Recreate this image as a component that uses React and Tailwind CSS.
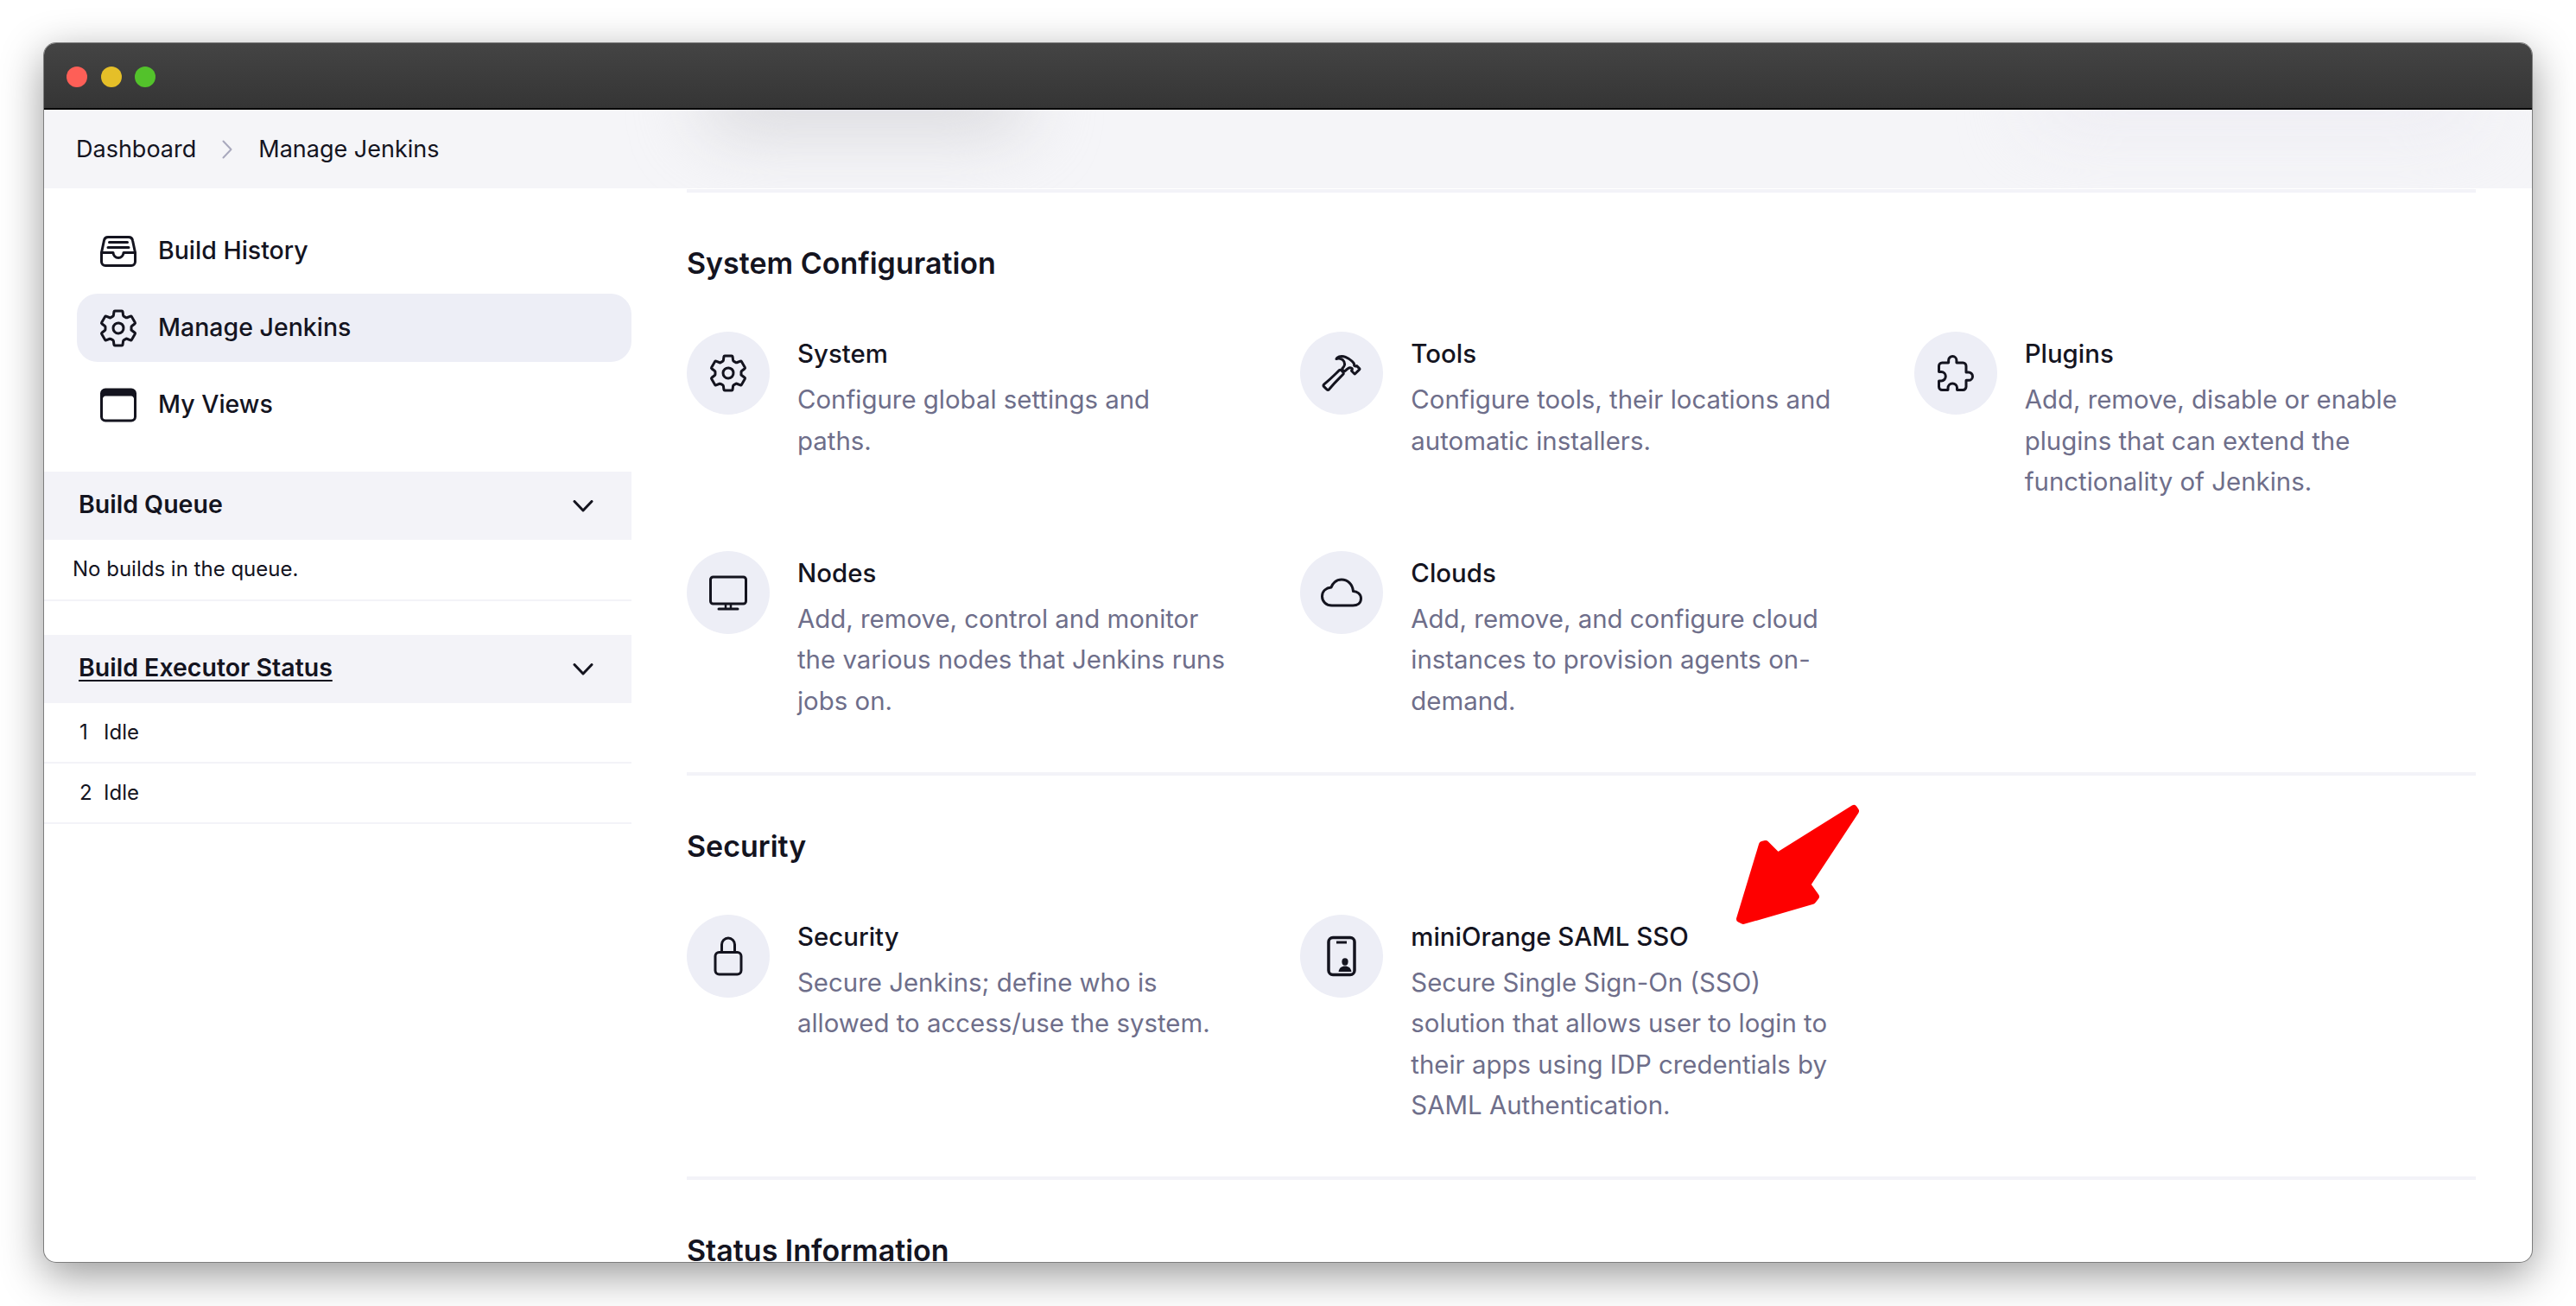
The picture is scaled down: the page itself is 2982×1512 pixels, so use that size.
import {
  IoFileTrayFullOutline,
  IoSettingsOutline,
  IoBrowsersOutline,
  IoHammerOutline,
  IoExtensionPuzzleOutline,
  IoCloudOutline,
  IoLockClosedOutline,
} from 'react-icons/io5';

function PhoneIcon() {
  return (
    <svg width="48" height="48" viewBox="0 0 48 48" fill="none">
      <rect x="9" y="2.5" width="30" height="43" rx="5" stroke="#14141f" strokeWidth="3.5" />
      <path d="M18 8h12" stroke="#14141f" strokeWidth="3" />
      <ellipse cx="28" cy="30.5" rx="3.6" ry="4.2" fill="#14141f" />
      <path d="M20.5 42c.6-4.6 3.6-6.6 7.5-6.6s6.900 2 7.500 6.600z" fill="#14141f" />
    </svg>
  );
}

function DesktopIcon() {
  return (
    <svg width="48" height="48" viewBox="0 0 48 48" fill="none">
      <rect x="3.500" y="6" width="41" height="31" rx="3" stroke="#14141f" strokeWidth="3" />
      <path d="M21 37v5M27 37v5" stroke="#14141f" strokeWidth="2.500" />
      <path d="M13 43h22" stroke="#14141f" strokeWidth="3" strokeLinecap="round" />
    </svg>
  );
}

function ChevronDown() {
  return (
    <svg width="24" height="14" viewBox="0 0 24 14" fill="none">
      <path d="M2 1.500l10 10.500L22 1.500" stroke="#14141f" strokeWidth="3" strokeLinecap="round" strokeLinejoin="round" />
    </svg>
  );
}

const sections = [
  {
    title: 'System Configuration',
    items: [
      { icon: <IoSettingsOutline size={48} />, name: 'System', desc: 'Configure global settings and paths.' },
      { icon: <IoHammerOutline size={48} />, name: 'Tools', desc: 'Configure tools, their locations and automatic installers.' },
      { icon: <IoExtensionPuzzleOutline size={48} />, name: 'Plugins', desc: 'Add, remove, disable or enable plugins that can extend the functionality of Jenkins.' },
      { icon: <DesktopIcon />, name: 'Nodes', desc: 'Add, remove, control and monitor the various nodes that Jenkins runs jobs on.' },
      { icon: <IoCloudOutline size={48} />, name: 'Clouds', desc: 'Add, remove, and configure cloud instances to provision agents on-demand.' },
    ],
  },
  {
    title: 'Security',
    items: [
      { icon: <IoLockClosedOutline size={48} />, name: 'Security', desc: 'Secure Jenkins; define who is allowed to access/use the system.' },
      { icon: <PhoneIcon />, name: 'miniOrange SAML SSO', desc: 'Secure Single Sign-On (SSO) solution that allows user to login to their apps using IDP credentials by SAML Authentication.' },
    ],
  },
];

const navItems = [
  { icon: <IoFileTrayFullOutline size={48} />, label: 'Build History' },
  { icon: <IoSettingsOutline size={48} />, label: 'Manage Jenkins', active: true },
  { icon: <IoBrowsersOutline size={48} />, label: 'My Views' },
];

function Card({ item }) {
  return (
    <div className="flex gap-8">
      <div className="flex size-24 shrink-0 items-center justify-center rounded-full bg-[#edeef6] text-[#14141f]">
        {item.icon}
      </div>
      <div className="w-[496px] pt-[5px]">
        <div className="text-[29.400px] leading-[42px] font-medium text-[#14141f]">{item.name}</div>
        <div className="mt-2 text-[29.400px] leading-[47.600px] text-[#6e6e8a]">{item.desc}</div>
      </div>
    </div>
  );
}

function Panel({ title, underline, children }) {
  return (
    <div>
      <div className="flex h-[79px] items-center justify-between bg-[#f3f3f8] pr-[44px] pl-[40px]">
        <span className={`pb-[2px] text-[28.500px] font-semibold text-[#14141f] ${underline ? 'underline underline-offset-4' : ''}`}>{title}</span>
        <ChevronDown />
      </div>
      {children}
    </div>
  );
}

export default function App() {
  return (
    <div className="relative h-[1512px] overflow-hidden bg-white pt-[50px] pl-[51px] font-['Inter',sans-serif]">
      <div className="flex h-[1411px] w-[2880px] flex-col overflow-hidden rounded-[14px] bg-white shadow-[0_0_0_1px_#7d7d7d,0_14px_50px_rgba(0,0,0,0.42)]">
        {/* Title bar */}
        <div className="flex h-[77px] shrink-0 items-center gap-[15.500px] border-b-2 border-black bg-gradient-to-b from-[#444444] to-[#353535] pt-[3px] pl-[26px]">
          <span className="size-6 rounded-full bg-[#fe5f57]" />
          <span className="size-6 rounded-full bg-[#e5bf28]" />
          <span className="size-6 rounded-full bg-[#53c22b]" />
        </div>

        {/* Breadcrumb bar */}
        <div className="relative flex h-[91px] shrink-0 items-center overflow-hidden bg-[#f5f5f8] pt-px pl-[37px] text-[27px] text-[#14141f]">
          <div className="absolute top-[-50px] left-[760px] h-[75px] w-[380px] rounded-full bg-[#d8d8dc] blur-2xl" />
          <div className="absolute top-[-40px] right-[60px] h-[60px] w-[520px] rounded-full bg-[#ecebf2] blur-2xl" />
          <span className="relative">Dashboard</span>
          <svg className="relative mx-[30px]" width="12" height="22" viewBox="0 0 12 22" fill="none">
            <path d="M1.500 1.500L10.500 11L1.500 20.500" stroke="#a9a9bd" strokeWidth="2" strokeLinecap="round" strokeLinejoin="round" />
          </svg>
          <span className="relative">Manage Jenkins</span>
        </div>

        <div className="flex min-h-0 flex-1">
          {/* Sidebar */}
          <aside className="w-[680px] shrink-0">
            <nav className="flex flex-col gap-[10px] pt-[33px] pl-[38px]">
              {navItems.map((n) => (
                <div
                  key={n.label}
                  className={`flex h-[79px] items-center gap-[22px] rounded-[24px] pl-[24px] text-[28.500px] font-medium text-[#14141f] ${n.active ? 'bg-[#edeef6]' : ''}`}
                >
                  {n.icon}
                  <span className="pb-px">{n.label}</span>
                </div>
              ))}
            </nav>

            <div className="mt-[38px] flex flex-col gap-[39px]">
              <Panel title="Build Queue">
                <div className="flex h-[71px] items-center border-b-2 border-[#f3f3f8] pb-[2px] pl-[33px] text-[24px] text-[#14141f]">
                  No builds in the queue.
                </div>
              </Panel>
              <Panel title="Build Executor Status" underline>
                {[1, 2].map((n) => (
                  <div key={n} className="flex h-[70px] items-center border-b-2 border-[#f3f3f8] pl-[41px] text-[24px] text-[#14141f]">
                    <span className="w-[28px]">{n}</span>
                    Idle
                  </div>
                ))}
              </Panel>
            </div>
          </aside>

          {/* Main content */}
          <main className="flex-1 pt-px pr-[65px] pl-[64px]">
            <div className="h-1 bg-[#f3f3f8]" />
            {sections.map((s) => (
              <section key={s.title} className="border-b-4 border-[#f3f3f8] pb-[58px]">
                <h2 className="mt-[60px] text-[34px] leading-[44px] font-semibold text-[#14141f]">{s.title}</h2>
                <div className="mt-[57px] grid grid-cols-3 gap-x-[60px] gap-y-[56px]">
                  {s.items.map((item) => (
                    <Card key={item.name} item={item} />
                  ))}
                </div>
              </section>
            ))}
            <h2 className="mt-[60px] text-[34px] leading-[44px] font-semibold text-[#14141f]">Status Information</h2>
          </main>
        </div>
      </div>

      {/* Red annotation arrow */}
      <svg className="absolute top-[925px] left-[2000px]" width="165" height="155" viewBox="2000 925 165 155">
        <path
          d="M2146 936L2148 939L2092 1024L2102 1038L2098 1043L2018 1066L2014 1064L2040 978L2044 977L2058 991Z"
          fill="#fe0000"
          stroke="#fe0000"
          strokeWidth="8"
          strokeLinejoin="round"
        />
      </svg>
    </div>
  );
}
